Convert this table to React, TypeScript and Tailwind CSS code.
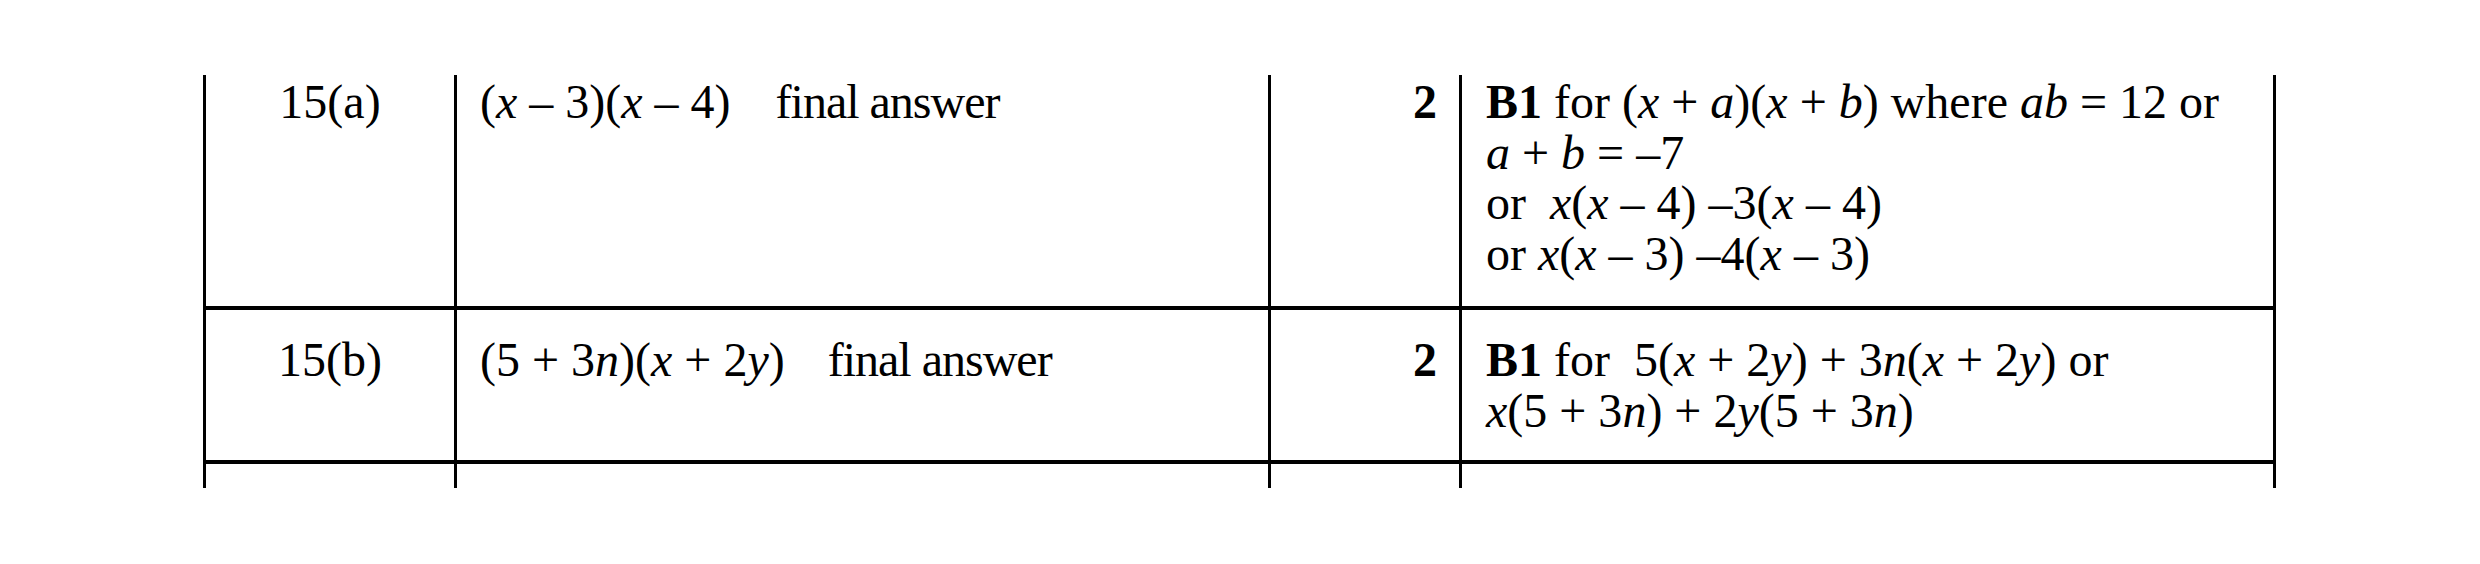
import React from "react";

const cellBase = "border-l-[3px] border-black";

export default function App() {
  return (
    <div className="w-[2480px] h-[564px] bg-white pt-[75px] text-black font-['Liberation_Serif','Times_New_Roman',serif] text-[48px] leading-[50.6px]">
      <div className="ml-[203px] w-[2073px] flex flex-col">
        {/* Row 15(a) */}
        <div className="flex h-[235px] border-b-4 border-black">
          <div className={`${cellBase} w-[251px] pt-[2px] text-center`}>15(a)</div>
          <div className={`${cellBase} w-[814px] pt-[2px] pl-[23px] whitespace-pre`}>
            (<i>x</i> – 3)(<i>x</i> – 4)<span className="ml-[45px] tracking-[-1px]">final answer</span>
          </div>
          <div className={`${cellBase} w-[191px] pt-[2px] pr-[22px] text-right font-bold`}>2</div>
          <div className={`${cellBase} border-r-[3px] w-[817px] pt-[2px] pl-[24px] whitespace-pre`}>
            <div>
              <b>B1</b> for (<i>x</i> + <i>a</i>)(<i>x</i> + <i>b</i>) where <i>ab</i> = 12 or
            </div>
            <div>
              <i>a</i> + <i>b</i> = –7
            </div>
            <div>
              {"or  "}<i>x</i>(<i>x</i> – 4) –3(<i>x</i> – 4)
            </div>
            <div>
              {"or "}<i>x</i>(<i>x</i> – 3) –4(<i>x</i> – 3)
            </div>
          </div>
        </div>

        {/* Row 15(b) */}
        <div className="flex h-[154px] border-b-4 border-black">
          <div className={`${cellBase} w-[251px] pt-[25px] text-center`}>15(b)</div>
          <div className={`${cellBase} w-[814px] pt-[25px] pl-[23px] whitespace-pre`}>
            (5 + 3<i>n</i>)(<i>x</i> + 2<i>y</i>)<span className="ml-[43px] tracking-[-1px]">final answer</span>
          </div>
          <div className={`${cellBase} w-[191px] pt-[25px] pr-[22px] text-right font-bold`}>2</div>
          <div className={`${cellBase} border-r-[3px] w-[817px] pt-[25px] pl-[24px] whitespace-pre`}>
            <div>
              <b>B1</b>{" for  5("}<i>x</i> + 2<i>y</i>) + 3<i>n</i>(<i>x</i> + 2<i>y</i>) or
            </div>
            <div>
              <i>x</i>(5 + 3<i>n</i>) + 2<i>y</i>(5 + 3<i>n</i>)
            </div>
          </div>
        </div>

        {/* Continuation row */}
        <div className="flex h-[24px]">
          <div className={`${cellBase} w-[251px]`} />
          <div className={`${cellBase} w-[814px]`} />
          <div className={`${cellBase} w-[191px]`} />
          <div className={`${cellBase} border-r-[3px] w-[817px]`} />
        </div>
      </div>
    </div>
  );
}
